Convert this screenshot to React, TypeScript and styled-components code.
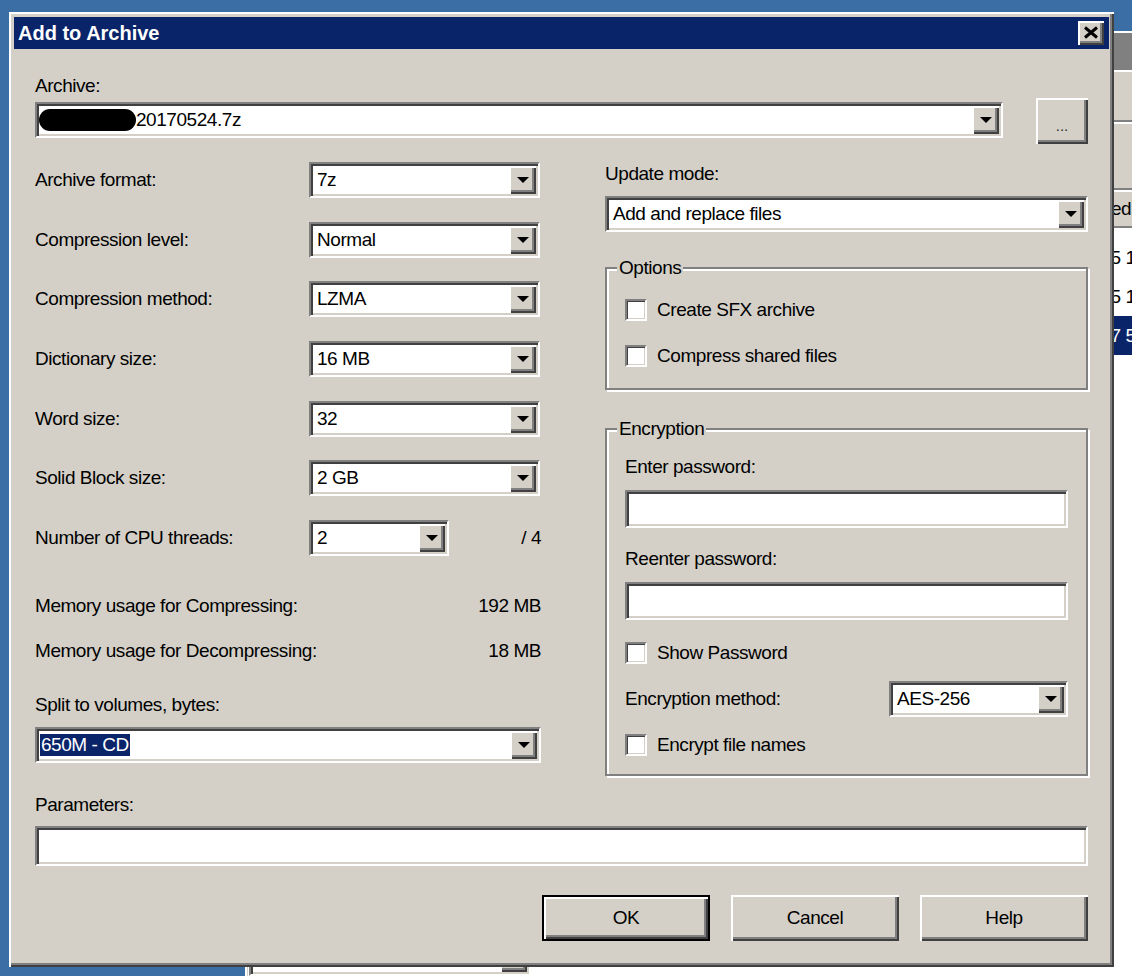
import React from "react";
import styled, { createGlobalStyle, css } from "styled-components";

const FONT = `"Liberation Sans", Arial, sans-serif`;

const GlobalStyle = createGlobalStyle`
  html, body { margin: 0; padding: 0; }
  body {
    background: #3a6ea5;
    font-family: ${FONT};
    font-size: 19px;
    letter-spacing: -0.45px;
    color: #000;
  }
  * { box-sizing: border-box; }
`;

const raised = css`
  background: #d4d0c8;
  box-shadow: inset 2px 2px 0 #ffffff, inset -2px -2px 0 #404040,
    inset -4px -4px 0 #808080;
`;

const sunken = css`
  background: #ffffff;
  border: 2px solid;
  border-color: #808080 #ffffff #ffffff #808080;
  box-shadow: inset 2px 2px 0 #404040, inset -2px -2px 0 #d4d0c8;
  padding: 2px;
`;

const Desktop = styled.div`
  position: relative;
  width: 1132px;
  height: 976px;
  overflow: hidden;
  background: #3a6ea5;
`;

/* ---------- window behind the dialog ---------- */
const BackWindow = styled.div`
  position: absolute;
  left: 245px;
  top: 31px;
  width: 940px;
  height: 980px;
  background: #d4d0c8;
  box-shadow: inset 2px 2px 0 #ffffff;
  padding: 2px 0 0 3px;
  display: flex;
  flex-direction: column;
`;

const BackTitle = styled.div`
  height: 37px;
  flex: none;
  background: #808080;
`;

const BackBar = styled.div<{ $h: number }>`
  height: ${(p) => p.$h}px;
  flex: none;
  border-top: 2px solid #ffffff;
  box-shadow: inset 0 -2px 0 #808080;
`;

const BackHeader = styled.div`
  height: 38px;
  flex: none;
  line-height: 38px;
  padding-left: 815px;
  box-shadow: inset 0 2px 0 #ffffff, inset 0 -2px 0 #808080;
  white-space: nowrap;
`;

const BackList = styled.div`
  position: relative;
  flex: 1;
  background: #ffffff;
  padding-top: 10px;
`;

const BackRow = styled.div<{ $sel?: boolean }>`
  height: 39px;
  line-height: 39px;
  padding-left: 780px;
  white-space: nowrap;
  background: ${(p) => (p.$sel ? "#0a246a" : "transparent")};
  color: ${(p) => (p.$sel ? "#ffffff" : "#000000")};
`;

const BackCombo = styled.div`
  position: absolute;
  left: 1px;
  top: 712px;
  width: 282px;
  height: 36px;
  display: flex;
  justify-content: flex-end;
  ${sunken};
`;

/* ---------- dialog ---------- */
const Dialog = styled.div`
  position: absolute;
  left: 9px;
  top: 12px;
  width: 1105px;
  height: 955px;
  background: #d4d0c8;
  padding: 5px;
  box-shadow: inset 2px 2px 0 #ffffff, inset -2px -2px 0 #404040,
    inset -4px -4px 0 #808080;
  display: flex;
  flex-direction: column;
`;

const TitleBar = styled.div`
  height: 32px;
  flex: none;
  background: #0a246a;
  display: flex;
  align-items: center;
  justify-content: space-between;
  padding: 0 5px 0 4px;
`;

const TitleText = styled.div`
  font-weight: bold;
  font-size: 20px;
  letter-spacing: 0;
  color: #ffffff;
  white-space: nowrap;
`;

const CloseButton = styled.div`
  width: 26px;
  height: 24px;
  display: flex;
  align-items: center;
  justify-content: center;
  padding-bottom: 1px;
  ${raised};
`;

const Body = styled.div`
  flex: 1;
  display: flex;
  flex-direction: column;
  padding: 0 21px;
`;

const Label = styled.div<{ $mt?: number }>`
  height: 22px;
  line-height: 22px;
  white-space: nowrap;
  flex: none;
  margin-top: ${(p) => p.$mt ?? 0}px;
`;

const ArchiveRow = styled.div`
  display: flex;
  align-items: flex-start;
  margin-top: 3px;
  height: 46px;
  flex: none;
`;

const ComboBox = styled.div<{ $w?: number; $mt?: number }>`
  ${sunken};
  display: flex;
  flex: none;
  width: ${(p) => (p.$w ? `${p.$w}px` : "100%")};
  height: 36px;
  margin-top: ${(p) => p.$mt ?? 0}px;
`;

const ComboValue = styled.div<{ $pad?: number }>`
  flex: 1;
  min-width: 0;
  display: flex;
  align-items: center;
  padding-left: ${(p) => p.$pad ?? 4}px;
  white-space: nowrap;
  overflow: hidden;
  line-height: 22px;
`;

const DropButton = styled.div`
  width: 27px;
  flex: none;
  display: flex;
  align-items: center;
  justify-content: center;
  ${raised};
`;

const Arrow = styled.span`
  width: 0;
  height: 0;
  border-left: 6px solid transparent;
  border-right: 6px solid transparent;
  border-top: 6px solid #000000;
`;

const Redacted = styled.span`
  display: inline-block;
  width: 97px;
  height: 22px;
  border-radius: 11px;
  background: #000000;
  flex: none;
`;

const Selected = styled.span`
  background: #0a246a;
  color: #ffffff;
  padding: 0 1px;
`;

const BrowseButton = styled.div`
  width: 52px;
  height: 46px;
  margin-left: 33px;
  margin-top: -2px;
  flex: none;
  display: flex;
  align-items: center;
  justify-content: center;
  font-size: 15px;
  letter-spacing: 0;
  padding-top: 8px;
  color: #303030;
  ${raised};
`;

const Columns = styled.div`
  display: grid;
  grid-template-columns: 506px 483px;
  column-gap: 64px;
  margin-top: 16px;
  flex: none;
`;

const Column = styled.div`
  display: flex;
  flex-direction: column;
`;

const SettingsGrid = styled.div`
  display: grid;
  grid-template-columns: 274px 1fr;
  grid-auto-rows: 36px;
  row-gap: 23.7px;
  align-items: center;
`;

const ControlCell = styled.div`
  display: flex;
  align-items: center;
`;

const SideValue = styled.span`
  flex: 1;
  text-align: right;
  white-space: nowrap;
`;

const InfoRow = styled.div<{ $mt: number }>`
  display: flex;
  justify-content: space-between;
  height: 22px;
  line-height: 22px;
  margin-top: ${(p) => p.$mt}px;
  white-space: nowrap;
`;

const Group = styled.fieldset<{ $mt: number }>`
  margin: ${(p) => p.$mt}px 0 0;
  padding: 0;
  min-width: 0;
  border: 2px solid #808080;
  box-shadow: inset 2px 2px 0 #ffffff, 2px 2px 0 #ffffff;
`;

const Legend = styled.legend`
  margin-left: 10px;
  padding: 0 2px;
  height: 22px;
  line-height: 22px;
  background: #d4d0c8;
`;

const GroupBody = styled.div<{ $pb: number }>`
  display: flex;
  flex-direction: column;
  padding: 0 18px ${(p) => p.$pb}px;
`;

const CheckRow = styled.div<{ $mt: number }>`
  display: flex;
  align-items: center;
  gap: 10px;
  height: 22px;
  margin-top: ${(p) => p.$mt}px;
  white-space: nowrap;
`;

const CheckBox = styled.span`
  width: 22px;
  height: 22px;
  flex: none;
  background: #ffffff;
  border: 2px solid;
  border-color: #808080 #ffffff #ffffff #808080;
  box-shadow: inset 1px 1px 0 #404040, inset -1px -1px 0 #d4d0c8;
`;

const TextField = styled.div<{ $h: number; $mt: number }>`
  ${sunken};
  height: ${(p) => p.$h}px;
  margin-top: ${(p) => p.$mt}px;
  flex: none;
`;

const MethodRow = styled.div<{ $mt: number }>`
  display: flex;
  align-items: center;
  justify-content: space-between;
  margin-top: ${(p) => p.$mt}px;
`;

const ButtonRow = styled.div`
  display: flex;
  justify-content: flex-end;
  gap: 21px;
  margin-top: 29px;
  flex: none;
`;

const PushButton = styled.div<{ $default?: boolean }>`
  width: 168px;
  height: 46px;
  display: flex;
  align-items: center;
  justify-content: center;
  ${raised};
  ${(p) =>
    p.$default &&
    css`
      border: 2px solid #000000;
    `}
`;

type ComboProps = {
  value: React.ReactNode;
  w?: number;
  mt?: number;
  pad?: number;
};

const Combo = ({ value, w, mt, pad }: ComboProps) => (
  <ComboBox $w={w} $mt={mt}>
    <ComboValue $pad={pad}>{value}</ComboValue>
    <DropButton>
      <Arrow />
    </DropButton>
  </ComboBox>
);

const Check = ({ label, mt }: { label: string; mt: number }) => (
  <CheckRow $mt={mt}>
    <CheckBox />
    <span>{label}</span>
  </CheckRow>
);

const settings: { label: string; value: string; w?: number; side?: string }[] = [
  { label: "Archive format:", value: "7z" },
  { label: "Compression level:", value: "Normal" },
  { label: "Compression method:", value: "LZMA" },
  { label: "Dictionary size:", value: "16 MB" },
  { label: "Word size:", value: "32" },
  { label: "Solid Block size:", value: "2 GB" },
  { label: "Number of CPU threads:", value: "2", w: 140, side: "/ 4" },
];

export default function App() {
  return (
    <Desktop>
      <GlobalStyle />
      <BackWindow>
        <BackTitle />
        <BackBar $h={52} />
        <BackBar $h={68} />
        <BackHeader>Modified</BackHeader>
        <BackList>
          <BackRow>2017-05-25 10:12</BackRow>
          <BackRow>2017-05-25 11:40</BackRow>
          <BackRow $sel>2017-05-17 5:31</BackRow>
          <BackCombo>
            <DropButton>
              <Arrow />
            </DropButton>
          </BackCombo>
        </BackList>
      </BackWindow>

      <Dialog>
        <TitleBar>
          <TitleText>Add to Archive</TitleText>
          <CloseButton>
            <svg width="16" height="13" viewBox="0 0 16 13">
              <path d="M2 1.5 L14 11.5 M14 1.5 L2 11.5" stroke="#000" strokeWidth="3" />
            </svg>
          </CloseButton>
        </TitleBar>

        <Body>
          <Label $mt={26}>Archive:</Label>
          <ArchiveRow>
            <Combo
              w={968}
              mt={2}
              pad={0}
              value={
                <>
                  <Redacted />
                  <span>20170524.7z</span>
                </>
              }
            />
            <BrowseButton>...</BrowseButton>
          </ArchiveRow>

          <Columns>
            <Column>
              <SettingsGrid>
                {settings.map((s) => (
                  <React.Fragment key={s.label}>
                    <Label>{s.label}</Label>
                    <ControlCell>
                      <Combo w={s.w ?? 231} value={s.value} />
                      {s.side && <SideValue>{s.side}</SideValue>}
                    </ControlCell>
                  </React.Fragment>
                ))}
              </SettingsGrid>
              <InfoRow $mt={39}>
                <span>Memory usage for Compressing:</span>
                <span>192 MB</span>
              </InfoRow>
              <InfoRow $mt={23}>
                <span>Memory usage for Decompressing:</span>
                <span>18 MB</span>
              </InfoRow>
              <Label $mt={32}>Split to volumes, bytes:</Label>
              <Combo mt={11} pad={1} value={<Selected>650M - CD</Selected>} />
            </Column>

            <Column>
              <Label $mt={1}>Update mode:</Label>
              <Combo mt={11} value="Add and replace files" />

              <Group $mt={25}>
                <Legend>Options</Legend>
                <GroupBody $pb={21}>
                  <Check mt={20} label="Create SFX archive" />
                  <Check mt={24} label="Compress shared files" />
                </GroupBody>
              </Group>

              <Group $mt={28}>
                <Legend>Encryption</Legend>
                <GroupBody $pb={18}>
                  <Label $mt={16}>Enter password:</Label>
                  <TextField $h={38} $mt={12} />
                  <Label $mt={20}>Reenter password:</Label>
                  <TextField $h={38} $mt={12} />
                  <Check mt={22} label="Show Password" />
                  <MethodRow $mt={17}>
                    <span>Encryption method:</span>
                    <Combo w={179} value="AES-256" />
                  </MethodRow>
                  <Check mt={17} label="Encrypt file names" />
                </GroupBody>
              </Group>
            </Column>
          </Columns>

          <Label $mt={18}>Parameters:</Label>
          <TextField $h={40} $mt={10} />

          <ButtonRow>
            <PushButton $default>OK</PushButton>
            <PushButton>Cancel</PushButton>
            <PushButton>Help</PushButton>
          </ButtonRow>
        </Body>
      </Dialog>
    </Desktop>
  );
}
